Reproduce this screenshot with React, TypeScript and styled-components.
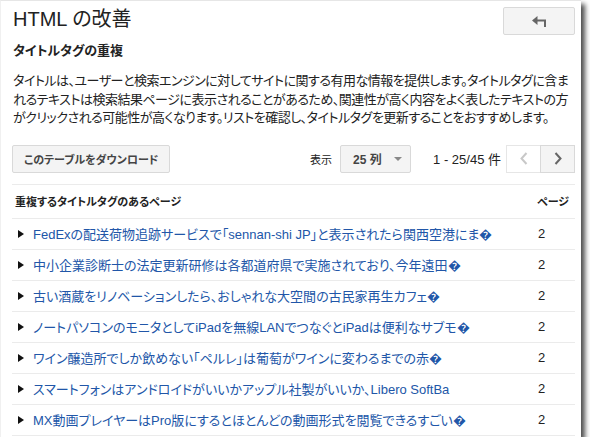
import React from "react";
import styled, { createGlobalStyle } from "styled-components";

const GlobalStyle = createGlobalStyle`
  html, body { margin: 0; padding: 0; background: #ffffff; }
  body { font-family: "Liberation Sans", "Noto Sans CJK JP", sans-serif; color: #222; }
`;

const Frame = styled.div`
  box-sizing: border-box;
  width: 581px;
  height: 437px;
  background: #fff;
  border-top: 1px solid #e6e6e6;
  border-left: 1px solid #f0f0f0;
  box-shadow: 4px 4px 5px rgba(0, 0, 0, 0.7);
  padding: 6px 6px 0 11px;
  overflow: hidden;
  font-feature-settings: "palt";
`;

const HeaderRow = styled.div`
  display: flex;
  justify-content: space-between;
  align-items: flex-start;
`;

const Title = styled.h1`
  margin: 0 0 0 1px;
  font-size: 20px;
  font-weight: normal;
  line-height: 24px;
  color: #222;
`;

const GrayButton = styled.button`
  box-sizing: border-box;
  height: 28px;
  border: 1px solid #d9d9d9;
  border-radius: 2px;
  background: #f4f4f4;
  color: #444;
  font-family: inherit;
  font-feature-settings: "palt";
  font-size: 11px;
  font-weight: bold;
  padding: 0 11px;
  display: flex;
  align-items: center;
  justify-content: center;
  cursor: pointer;
`;

const BackButton = styled(GrayButton)`
  width: 72px;
`;

const Subtitle = styled.h2`
  margin: 7px 0 0 1px;
  font-size: 13px;
  font-weight: bold;
  line-height: 18px;
`;

const Description = styled.p`
  margin: 12px 0 0 1px;
  font-size: 13px;
  line-height: 18.5px;
  letter-spacing: -0.5px;
  color: #222;
  white-space: nowrap;
`;

const Toolbar = styled.div`
  display: flex;
  align-items: center;
  margin-top: 17px;
  height: 28px;
`;

const Spacer = styled.div`
  flex: 1;
`;

const SmallLabel = styled.span`
  font-size: 11px;
  color: #222;
  margin-right: 8px;
`;

const Select = styled.div`
  box-sizing: border-box;
  width: 71px;
  height: 28px;
  border: 1px solid #d9d9d9;
  border-radius: 2px;
  background: #f4f4f4;
  display: flex;
  align-items: center;
  padding: 0 8px 0 12px;
  font-size: 12px;
  font-weight: bold;
  color: #444;
`;

const Caret = styled.span`
  margin-left: auto;
  width: 0;
  height: 0;
  border-left: 4px solid transparent;
  border-right: 4px solid transparent;
  border-top: 4px solid #888;
`;

const RangeText = styled.span`
  margin-left: 22px;
  margin-right: 5px;
  font-size: 13px;
  color: #222;
`;

const PagerButton = styled.button<{ $disabled?: boolean }>`
  box-sizing: border-box;
  width: 35px;
  height: 28px;
  border: 1px solid ${(p) => (p.$disabled ? "#e6e6e6" : "#d9d9d9")};
  background: ${(p) => (p.$disabled ? "#ffffff" : "#f4f4f4")};
  color: ${(p) => (p.$disabled ? "#c8c8c8" : "#666")};
  display: flex;
  align-items: center;
  justify-content: center;
  padding: 0;
  & + & { margin-left: -1px; }
`;

const Table = styled.div`
  margin-top: 11px;
  border-top: 1px solid #ebebeb;
`;

const HeadRow = styled.div`
  display: flex;
  align-items: center;
  height: 33px;
  border-bottom: 1px solid #ebebeb;
  font-size: 11px;
  font-weight: bold;
  color: #222;
`;

const HeadCell = styled.div`
  flex: 1;
  padding-left: 3px;
`;

const HeadCount = styled.div`
  width: 38px;
`;

const Row = styled.div`
  display: flex;
  align-items: center;
  height: 30px;
  border-bottom: 1px solid #ebebeb;
  font-size: 13px;
`;

const Arrow = styled.span`
  width: 0;
  height: 0;
  border-top: 4.5px solid transparent;
  border-bottom: 4.5px solid transparent;
  border-left: 6px solid #111;
  margin: 0 9px 0 6px;
`;

const Link = styled.a`
  flex: 1;
  color: #2156a8;
  text-decoration: none;
  white-space: nowrap;
  overflow: hidden;
`;

const Count = styled.div`
  width: 37px;
  font-size: 13px;
  color: #222;
`;

const BackIcon = () => (
  <svg width="15" height="11" viewBox="0 0 15 11">
    <path d="M0 4.5 L5.5 0 L5.5 9 Z" fill="#666" />
    <path d="M4 4.5 H13 V11" fill="none" stroke="#666" strokeWidth="2" />
  </svg>
);

const Chevron = ({ dir }: { dir: "left" | "right" }) => (
  <svg width="8" height="13" viewBox="0 0 8 13">
    <path
      d={dir === "left" ? "M6.5 1 L1.5 6.5 L6.5 12" : "M1.5 1 L6.5 6.5 L1.5 12"}
      fill="none"
      stroke="currentColor"
      strokeWidth="2"
    />
  </svg>
);

const rows = [
  "FedExの配送荷物追跡サービスで「sennan-shi JP」と表示されたら関西空港にま\uFFFD",
  "中小企業診断士の法定更新研修は各都道府県で実施されており、今年遠田\uFFFD",
  "古い酒蔵をリノベーションしたら、おしゃれな大空間の古民家再生カフェ\uFFFD",
  "ノートパソコンのモニタとしてiPadを無線LANでつなぐとiPadは便利なサブモ\uFFFD",
  "ワイン醸造所でしか飲めない「ペルレ」は葡萄がワインに変わるまでの赤\uFFFD",
  "スマートフォンはアンドロイドがいいかアップル社製がいいか、Libero SoftBa",
  "MX動画プレイヤーはPro版にするとほとんどの動画形式を閲覧できるすごい\uFFFD",
];

export default function App() {
  return (
    <>
      <GlobalStyle />
      <Frame>
        <HeaderRow>
          <Title>HTML の改善</Title>
          <BackButton aria-label="戻る">
            <BackIcon />
          </BackButton>
        </HeaderRow>
        <Subtitle>タイトルタグの重複</Subtitle>
        <Description>
          タイトルは、ユーザーと検索エンジンに対してサイトに関する有用な情報を提供します。タイトルタグに含ま
          <br />
          れるテキストは検索結果ページに表示されることがあるため、関連性が高く内容をよく表したテキストの方
          <br />
          がクリックされる可能性が高くなります。リストを確認し、タイトルタグを更新することをおすすめします。
        </Description>
        <Toolbar>
          <GrayButton>このテーブルをダウンロード</GrayButton>
          <Spacer />
          <SmallLabel>表示</SmallLabel>
          <Select>
            25 列<Caret />
          </Select>
          <RangeText>1 - 25/45 件</RangeText>
          <PagerButton $disabled aria-label="前へ">
            <Chevron dir="left" />
          </PagerButton>
          <PagerButton aria-label="次へ">
            <Chevron dir="right" />
          </PagerButton>
        </Toolbar>
        <Table>
          <HeadRow>
            <HeadCell>重複するタイトルタグのあるページ</HeadCell>
            <HeadCount>ページ</HeadCount>
          </HeadRow>
          {rows.map((r) => (
            <Row key={r}>
              <Arrow />
              <Link href="#">{r}</Link>
              <Count>2</Count>
            </Row>
          ))}
        </Table>
      </Frame>
    </>
  );
}
